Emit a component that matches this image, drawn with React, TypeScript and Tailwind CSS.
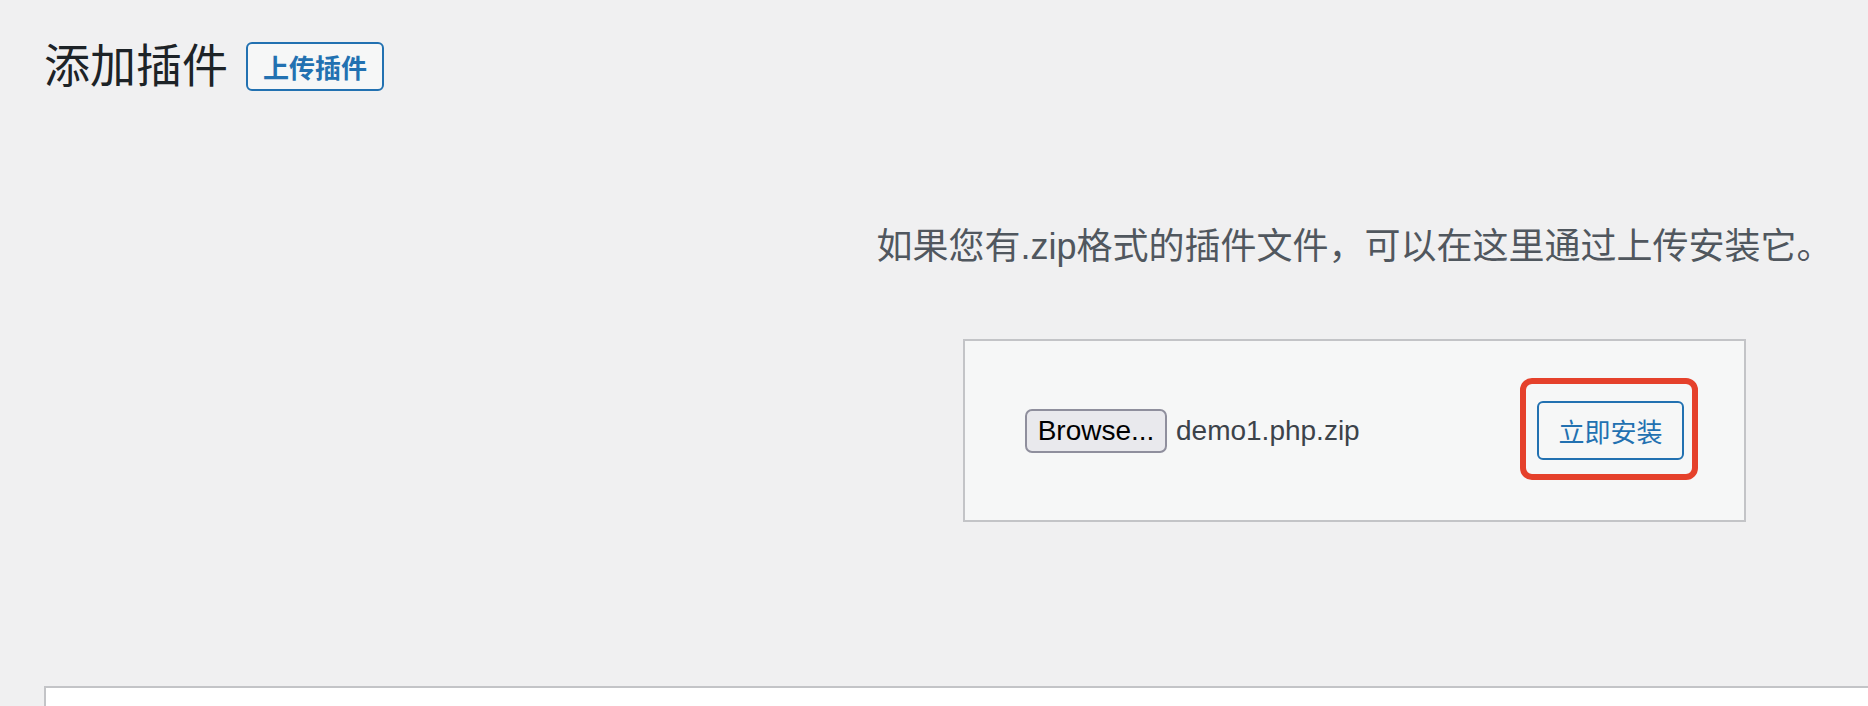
export default function App() {
  return (
    <div className="w-[1868px] h-[706px] overflow-hidden bg-[#f0f0f1] font-['Liberation_Sans','Noto_Sans_CJK_SC',sans-serif]">
      <div className="ml-[44px] w-[2621px]">
        <div className="flex items-start pt-[39px]">
          <h1 className="text-[46px] leading-[46px] font-normal text-[#1d2327] font-['Noto_Sans_CJK_SC',sans-serif] whitespace-nowrap">
            添加插件
          </h1>
          <a
            href="#"
            className="ml-[18px] mt-[3px] h-[49px] px-[15px] border-2 border-[#2271b1] rounded-[6px] bg-[#f6f7f7] text-[#2271b1] text-[26px] font-semibold leading-[45px] whitespace-nowrap font-['Noto_Sans_CJK_SC',sans-serif]"
          >
            上传插件
          </a>
        </div>
        <div className="flex flex-col items-center">
          <p className="mt-[138px] text-[36px] leading-[36px] text-[#50575e] whitespace-nowrap">
            如果您有.zip格式的插件文件，可以在这里通过上传安装它。
          </p>
          <form className="mt-[74px] w-[783px] h-[183px] flex items-center justify-between border-2 border-[#c3c4c7] bg-[#f6f7f7] px-[60px]">
            <div className="flex items-center">
              <span className="flex items-center justify-center w-[142px] h-[44px] border-2 border-[#8f8f9d] rounded-[7px] bg-[#e9e9ed] text-[28px] text-black font-['Liberation_Sans',sans-serif]">
                Browse...
              </span>
              <span className="ml-[9px] text-[28px] text-[#3c434a] font-['Liberation_Sans',sans-serif]">
                demo1.php.zip
              </span>
            </div>
            <div className="relative">
              <span className="absolute -left-[17px] -right-[14px] -top-[23px] -bottom-[20px] border-[6px] border-[#e5412b] rounded-[12px] pointer-events-none" />
              <button
                type="button"
                className="w-[147px] h-[59px] border-2 border-[#2271b1] rounded-[6px] bg-[#f6f7f7] text-[#2271b1] text-[26px] leading-[55px] font-['Noto_Sans_CJK_SC',sans-serif]"
              >
                立即安装
              </button>
            </div>
          </form>
        </div>
        <div className="mt-[164px] h-[200px] border-2 border-[#c3c4c7] bg-white" />
      </div>
    </div>
  );
}
